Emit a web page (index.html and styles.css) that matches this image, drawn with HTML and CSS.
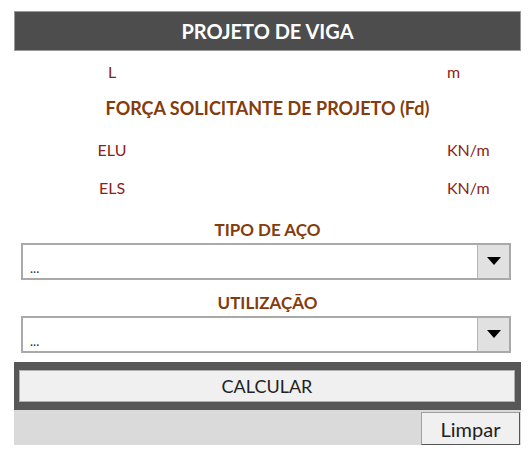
FILE: index.html
```html
<!DOCTYPE html>
<html lang="pt">
<head>
    <meta charset="UTF-8">
    <meta name="viewport" content="width=device-width, initial-scale=1.0">
    <title>Projeto de Viga</title>
    <link rel="stylesheet" href="styles.css">
</head>
<body>
    <div class="form">
        <div class="title-bar">PROJETO DE VIGA</div>

        <div class="row row-l">
            <span class="label">L</span>
            <span class="unit">m</span>
        </div>

        <div class="heading heading-fd">FORÇA SOLICITANTE DE PROJETO (Fd)</div>

        <div class="row row-elu">
            <span class="label">ELU</span>
            <span class="unit">KN/m</span>
        </div>
        <div class="row row-els">
            <span class="label">ELS</span>
            <span class="unit">KN/m</span>
        </div>

        <div class="heading heading-combo">TIPO DE AÇO</div>
        <div class="combo">
            <span class="combo-text">...</span>
            <span class="combo-btn">
                <svg width="14" height="9" viewBox="0 0 14 9"><path d="M0 0 H14 L7 8 Z" fill="#000"/></svg>
            </span>
        </div>

        <div class="heading heading-combo">UTILIZAÇÃO</div>
        <div class="combo">
            <span class="combo-text">...</span>
            <span class="combo-btn">
                <svg width="14" height="9" viewBox="0 0 14 9"><path d="M0 0 H14 L7 8 Z" fill="#000"/></svg>
            </span>
        </div>

        <div class="calc-bar">
            <button class="calc-btn">CALCULAR</button>
        </div>

        <div class="footer-bar">
            <button class="clear-btn">Limpar</button>
        </div>
    </div>
</body>
</html>
```
FILE: styles.css
```css
body {
    margin: 0;
    background-color: #ffffff;
    font-family: Lato, "Open Sans", sans-serif;
}

.form {
    width: 507px;
    margin: 11px 0 0 14px;
}

/* Title */
.title-bar {
    height: 38px;
    line-height: 38px;
    background-color: #4d4d4d;
    border: 1px solid #9a9a9a;
    color: #ffffff;
    font-weight: bold;
    font-size: 20px;
    text-align: center;
}

/* Label rows */
.row {
    display: grid;
    grid-template-columns: 196px 1fr;
    color: #8a2418;
    font-size: 16px;
}

.row .label {
    text-align: center;
}

.row .unit {
    padding-left: 237px;
}

.row-l {
    height: 42px;
    line-height: 42px;
}

.row-elu {
    margin-top: 8px;
    height: 38px;
    line-height: 38px;
}

.row-els {
    height: 38px;
    line-height: 38px;
}

.heading {
    color: #843c0c;
    font-weight: bold;
    font-size: 17px;
    text-align: center;
}

.heading-fd {
    height: 30px;
    line-height: 30px;
    font-size: 18px;
}

.heading-combo {
    height: 36px;
    line-height: 27px;
    box-sizing: border-box;
    padding-top: 9px;
}

/* Combo boxes */
.combo {
    display: flex;
    margin-left: 7px;
    width: 490px;
    height: 37px;
    box-sizing: border-box;
    border: 2px solid #a9a9a9;
    background-color: #ffffff;
}

.combo-text {
    flex: 1;
    align-self: flex-end;
    padding: 0 0 2px 7px;
    font-size: 13px;
    color: #333333;
}

.combo-btn {
    width: 31px;
    display: flex;
    align-items: center;
    justify-content: center;
    background-color: #e1e1e1;
    border-left: 1px solid #b5b5b5;
}

/* Buttons */
.calc-bar {
    margin-top: 9px;
    height: 48px;
    box-sizing: border-box;
    padding: 8px 6px 8px 5px;
    background-color: #575757;
}

.calc-btn {
    display: block;
    width: 100%;
    height: 32px;
    background-color: #f0f0f0;
    border: 1px solid #b0b0b0;
    font-family: Lato, "Open Sans", sans-serif;
    font-size: 18px;
    color: #222222;
    padding: 0;
}

.footer-bar {
    display: flex;
    justify-content: flex-end;
    height: 35px;
    background-color: #dadada;
}

.clear-btn {
    margin-top: 2px;
    margin-right: 1px;
    width: 99px;
    height: 33px;
    background-color: #f0f0f0;
    border: 1px solid #a0a0a0;
    border-right-color: #555555;
    border-bottom-color: #555555;
    font-family: Lato, "Open Sans", sans-serif;
    font-size: 20px;
    color: #222222;
    padding: 0;
}
```
